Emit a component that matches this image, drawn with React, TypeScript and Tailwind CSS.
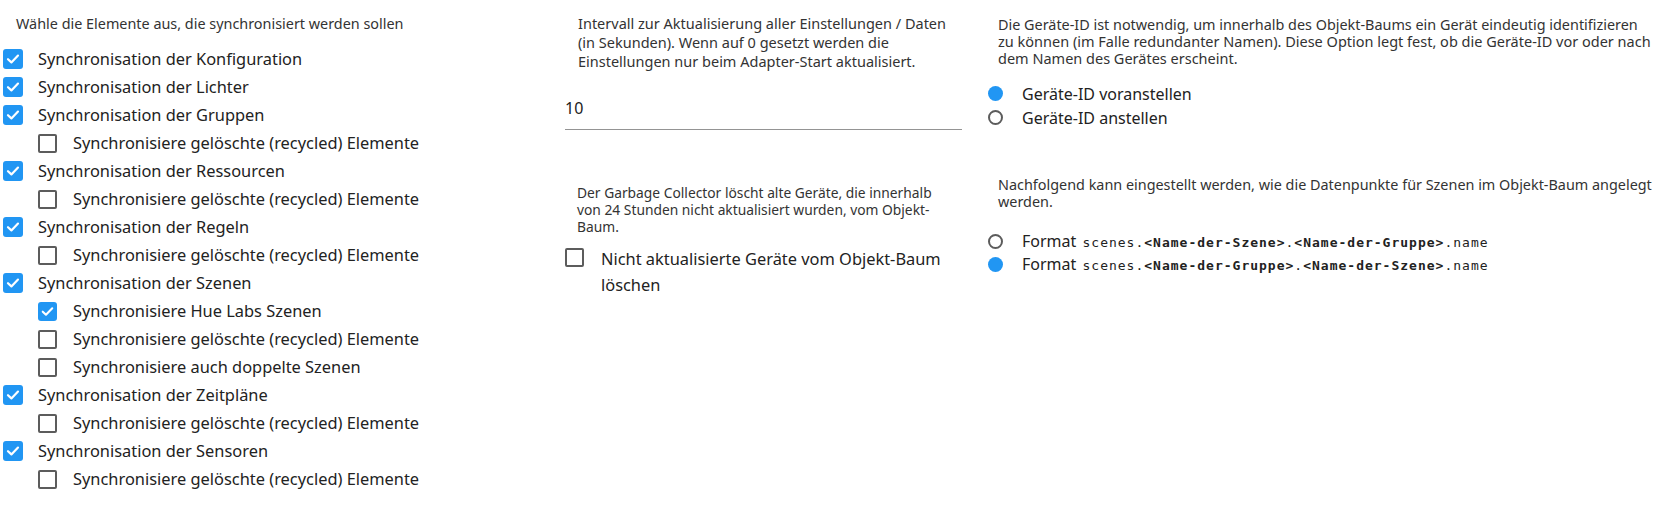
import React from "react";

const sans = "font-['Noto_Sans','Open_Sans',sans-serif]";

function Box({ checked, big }: { checked: boolean; big?: boolean }) {
  if (checked) {
    return (
      <span className={`flex ${big ? "w-[20px] h-[20px]" : "w-[19px] h-[19px]"} shrink-0 items-center justify-center rounded-[3px] bg-[#2196f3]`}>
        <svg viewBox="0 0 20 20" className="w-full h-full">
          <path d="M5 10.2 L8.4 13.4 L15 6.6" fill="none" stroke="#fff" strokeWidth="2.2" strokeLinecap="round" strokeLinejoin="round" />
        </svg>
      </span>
    );
  }
  return <span className="block w-[19px] h-[19px] shrink-0 rounded-[2px] border-2 border-[#5c5c5c]" />;
}

type Item = { label: string; checked: boolean; sub?: boolean };

const items: Item[] = [
  { label: "Synchronisation der Konfiguration", checked: true },
  { label: "Synchronisation der Lichter", checked: true },
  { label: "Synchronisation der Gruppen", checked: true },
  { label: "Synchronisiere gelöschte (recycled) Elemente", checked: false, sub: true },
  { label: "Synchronisation der Ressourcen", checked: true },
  { label: "Synchronisiere gelöschte (recycled) Elemente", checked: false, sub: true },
  { label: "Synchronisation der Regeln", checked: true },
  { label: "Synchronisiere gelöschte (recycled) Elemente", checked: false, sub: true },
  { label: "Synchronisation der Szenen", checked: true },
  { label: "Synchronisiere Hue Labs Szenen", checked: true, sub: true },
  { label: "Synchronisiere gelöschte (recycled) Elemente", checked: false, sub: true },
  { label: "Synchronisiere auch doppelte Szenen", checked: false, sub: true },
  { label: "Synchronisation der Zeitpläne", checked: true },
  { label: "Synchronisiere gelöschte (recycled) Elemente", checked: false, sub: true },
  { label: "Synchronisation der Sensoren", checked: true },
  { label: "Synchronisiere gelöschte (recycled) Elemente", checked: false, sub: true },
];

function Radio({ checked }: { checked: boolean }) {
  return checked ? (
    <span className="block w-[15px] h-[15px] shrink-0 rounded-full bg-[#2196f3]" />
  ) : (
    <span className="block w-[15px] h-[15px] shrink-0 rounded-full border-2 border-[#5c5c5c]" />
  );
}

function Mono({ children, bold }: { children: React.ReactNode; bold?: boolean }) {
  return (
    <span className={`font-['DejaVu_Sans_Mono',monospace] text-[13px] tracking-[1px] ${bold ? "font-bold" : ""}`}>{children}</span>
  );
}

function SceneFormat({ first, second }: { first: string; second: string }) {
  return (
    <span className="text-[16px] whitespace-nowrap">
      Format{" "}
      <span className="ml-[2px]">
        <Mono>scenes.</Mono>
        <Mono bold>&lt;{first}&gt;</Mono>
        <Mono>.</Mono>
        <Mono bold>&lt;{second}&gt;</Mono>
        <Mono>.name</Mono>
      </span>
    </span>
  );
}

export default function App() {
  return (
    <div className={`flex w-[1656px] h-[517px] bg-white text-[#222] ${sans}`}>
      {/* Sync options */}
      <div className="w-[565px] shrink-0">
        <div className="h-[45px] pl-[16px] pt-[14px] text-[14.4px] leading-[20px] text-[#333]">
          Wähle die Elemente aus, die synchronisiert werden sollen
        </div>
        {items.map((it, i) => (
          <div key={i} className={`flex h-[28px] items-center ${it.sub ? "pl-[38px] gap-[16px]" : "pl-[3px] gap-[15px]"}`}>
            <Box checked={it.checked} big={!it.sub} />
            <span className="text-[16.4px] leading-[24px] whitespace-nowrap">{it.label}</span>
          </div>
        ))}
      </div>

      {/* Interval + garbage collector */}
      <div className="w-[397px] shrink-0">
        <p className="pl-[13px] pt-[14px] text-[14.5px] leading-[19px] text-[#333] whitespace-nowrap">
          Intervall zur Aktualisierung aller Einstellungen / Daten
          <br />
          (in Sekunden). Wenn auf 0 gesetzt werden die
          <br />
          Einstellungen nur beim Adapter-Start aktualisiert.
        </p>
        <div className="mt-[25px] border-b border-[#949494] pb-[9px] text-[16px] leading-[24px]">10</div>
        <p className="mt-[54px] pl-[12px] text-[13.8px] leading-[17px] text-[#333] whitespace-nowrap">
          Der Garbage Collector löscht alte Geräte, die innerhalb
          <br />
          von 24 Stunden nicht aktualisiert wurden, vom Objekt-
          <br />
          Baum.
        </p>
        <div className="mt-[11px] flex items-start gap-[17px]">
          <span className="mt-[2px]">
            <Box checked={false} />
          </span>
          <span className="text-[16.4px] leading-[26px]">
            Nicht aktualisierte Geräte vom Objekt-Baum
            <br />
            löschen
          </span>
        </div>
      </div>

      {/* Device id + scene naming */}
      <div className="ml-[26px] flex-1">
        <div className="pl-[10px] pt-[15.5px] leading-[17px] text-[#333] whitespace-nowrap">
          <div className="text-[14.4px]">
            Die Geräte-ID ist notwendig, um innerhalb des Objekt-Baums ein Gerät eindeutig identifizieren
          </div>
          <div className="text-[14.5px]">
            zu können (im Falle redundanter Namen). Diese Option legt fest, ob die Geräte-ID vor oder nach
          </div>
          <div className="text-[14.5px]">dem Namen des Gerätes erscheint.</div>
        </div>
        <div className="mt-[15px]">
          <div className="flex h-[24px] items-center gap-[19px]">
            <Radio checked />
            <span className="text-[16px]">Geräte-ID voranstellen</span>
          </div>
          <div className="flex h-[24px] items-center gap-[19px]">
            <Radio checked={false} />
            <span className="text-[16px]">Geräte-ID anstellen</span>
          </div>
        </div>
        <div className="mt-[46px] pl-[10px] text-[14.4px] leading-[17px] text-[#333] whitespace-nowrap">
          <div>Nachfolgend kann eingestellt werden, wie die Datenpunkte für Szenen im Objekt-Baum angelegt</div>
          <div>werden.</div>
        </div>
        <div className="mt-[20px]">
          <div className="flex h-[23px] items-center gap-[19px]">
            <Radio checked={false} />
            <SceneFormat first="Name-der-Szene" second="Name-der-Gruppe" />
          </div>
          <div className="flex h-[23px] items-center gap-[19px]">
            <Radio checked />
            <SceneFormat first="Name-der-Gruppe" second="Name-der-Szene" />
          </div>
        </div>
      </div>
    </div>
  );
}
